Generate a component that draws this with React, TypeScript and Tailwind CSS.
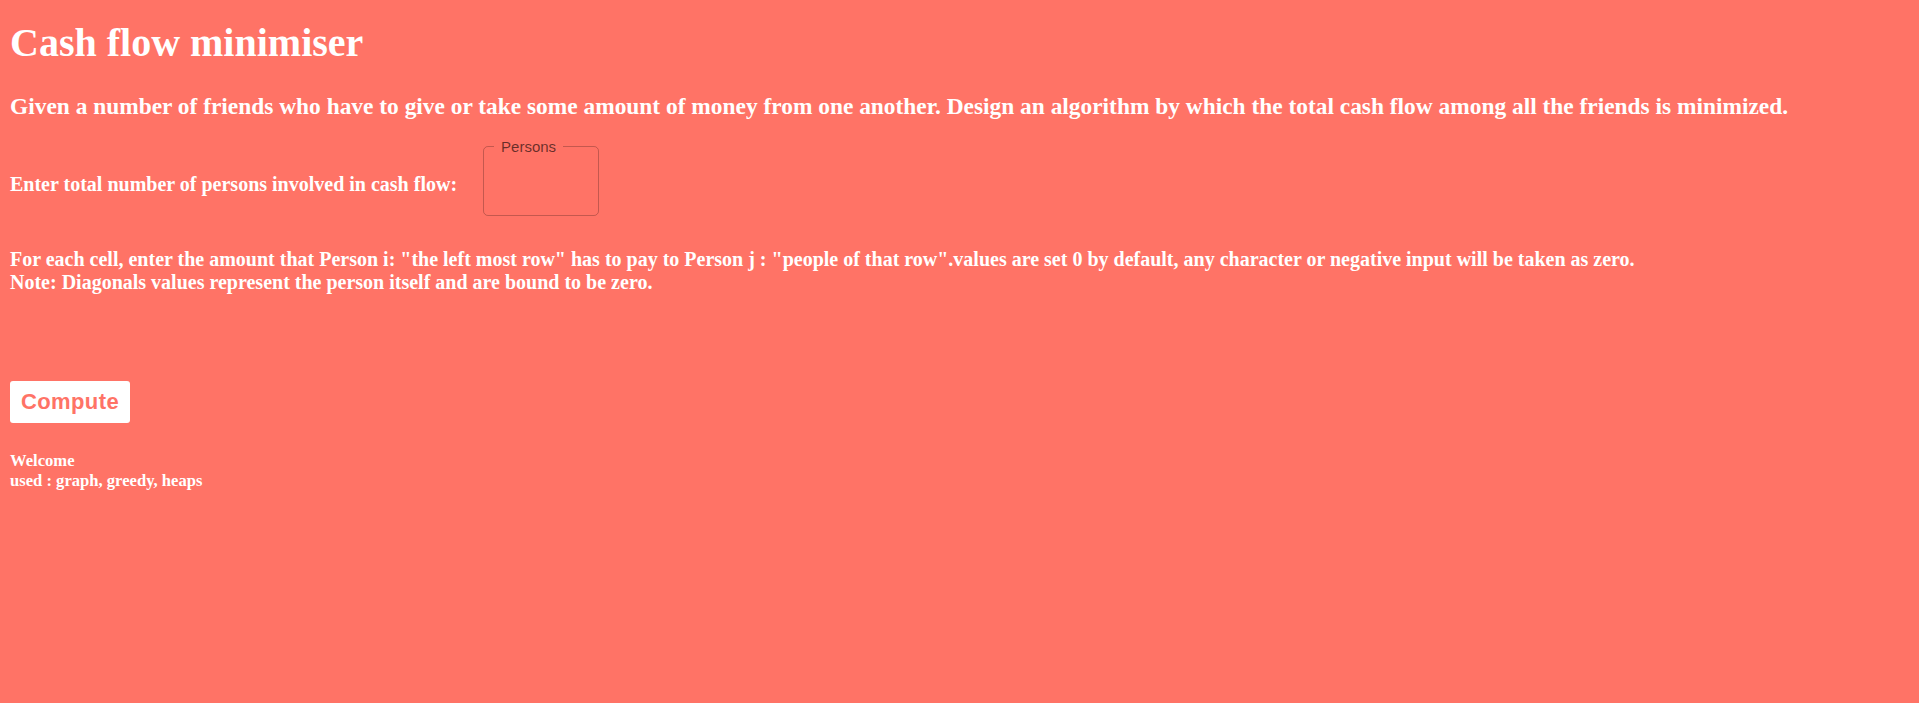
import React from "react";

const App = () => {
  return (
    <div className="min-h-screen bg-[#ff7366] px-[10px] pt-[20px] text-white font-['Liberation_Serif','Times_New_Roman',serif]">
      <h1 className="text-[40px] font-bold leading-[46px] mb-[27px]">Cash flow minimiser</h1>
      <h3 className="text-[23.4px] font-bold leading-[27px]">
        Given a number of friends who have to give or take some amount of money from one another. Design an algorithm by which the total cash flow among all the friends is minimized.
      </h3>

      <div className="flex items-start gap-[26px] mt-[18px]">
        <h4 className="mt-[34.5px] text-[20px] font-bold leading-[23px]">
          Enter total number of persons involved in cash flow:
        </h4>
        <fieldset className="w-[116px] h-[78px] border border-[rgba(0,0,0,0.23)] rounded-[5px] pl-[10px]">
          <legend className="px-[7px] text-[15px] leading-[17px] text-[rgba(0,0,0,0.6)] font-['Liberation_Sans',Arial,sans-serif]">
            Persons
          </legend>
        </fieldset>
      </div>

      <div className="mt-[31.5px] text-[20px] font-bold leading-[23px]">
        <p>
          For each cell, enter the amount that Person i: "the left most row" has to pay to Person j : "people of that row".values are set 0 by default, any character or negative input will be taken as zero.
        </p>
        <p>Note: Diagonals values represent the person itself and are bound to be zero.</p>
      </div>

      <div className="mt-[87px]">
        <button className="w-[120px] h-[42px] bg-white rounded-[3px] text-[#ff7366] font-bold text-[22px] tracking-[0.4px] font-['Liberation_Sans',Arial,sans-serif]">
          Compute
        </button>
      </div>

      <div className="mt-[28px] text-[16.6px] font-bold leading-[20px]">
        <p>Welcome</p>
        <p>used : graph, greedy, heaps</p>
      </div>
    </div>
  );
};

export default App;
